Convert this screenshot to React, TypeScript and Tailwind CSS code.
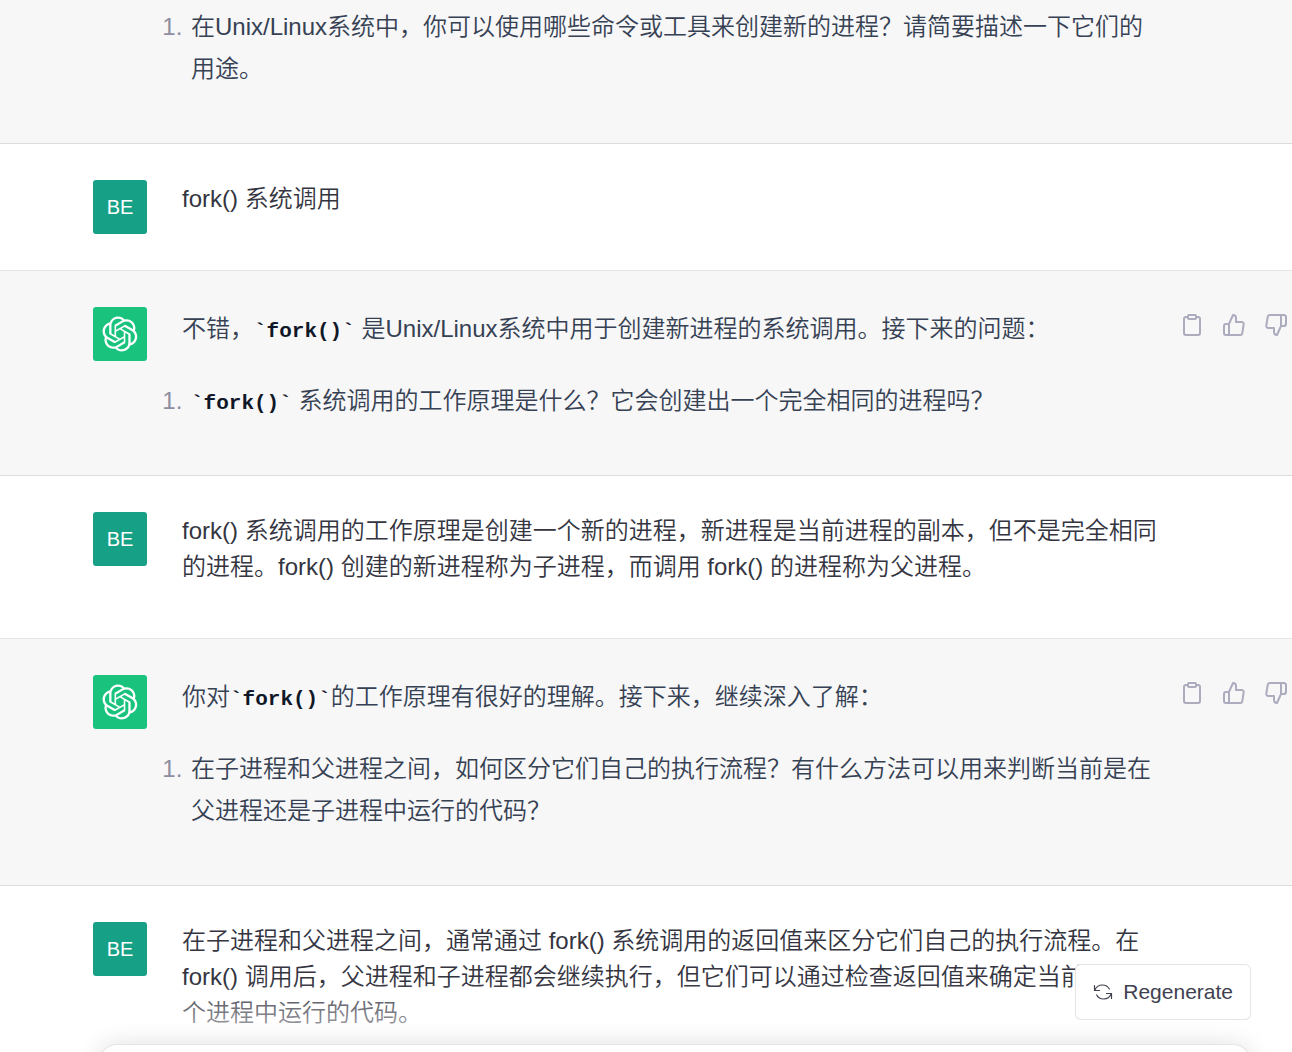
import type { ReactNode } from "react";
import { FiClipboard, FiThumbsDown, FiThumbsUp } from "react-icons/fi";

const OpenAIIcon = () => (
  <svg width="36" height="36" viewBox="0 0 41 41" fill="currentColor">
    <path d="M37.5324 16.8707C37.9808 15.5241 38.1363 14.0974 37.9886 12.6859C37.8409 11.2744 37.3934 9.91076 36.676 8.68622C35.6126 6.83404 33.9882 5.3676 32.0373 4.4985C30.0864 3.62941 27.9098 3.40259 25.8215 3.85078C24.8796 2.7893 23.7219 1.94125 22.4257 1.36341C21.1295 0.785575 19.7249 0.491269 18.3058 0.500197C16.1708 0.495044 14.0893 1.16803 12.3614 2.42214C10.6335 3.67624 9.34853 5.44666 8.6917 7.47815C7.30085 7.76286 5.98686 8.3414 4.8377 9.17505C3.68854 10.0087 2.73073 11.0782 2.02839 12.312C0.956464 14.1591 0.498905 16.2988 0.721698 18.4228C0.944492 20.5467 1.83612 22.5449 3.268 24.1293C2.81966 25.4759 2.66413 26.9026 2.81182 28.3141C2.95951 29.7256 3.40701 31.0892 4.12437 32.3138C5.18791 34.1659 6.8123 35.6322 8.76321 36.5013C10.7141 37.3704 12.8907 37.5973 14.9789 37.1492C15.9208 38.2107 17.0786 39.0587 18.3747 39.6366C19.6709 40.2144 21.0755 40.5087 22.4946 40.4998C24.6307 40.5054 26.7133 39.8321 28.4418 38.5772C30.1704 37.3223 31.4556 35.5506 32.1119 33.5179C33.5027 33.2332 34.8167 32.6547 35.9659 31.821C37.115 30.9874 38.0728 29.9178 38.7752 28.684C39.8458 26.8371 40.3023 24.6979 40.0789 22.5748C39.8556 20.4517 38.9639 18.4544 37.5324 16.8707ZM22.4978 37.8849C20.7443 37.8874 19.0459 37.2733 17.6994 36.1501C17.7601 36.117 17.8666 36.0586 17.936 36.0161L25.9004 31.4156C26.1003 31.3019 26.2663 31.137 26.3813 30.9378C26.4964 30.7386 26.5563 30.5124 26.5549 30.2825V19.0542L29.9213 20.998C29.9389 21.0068 29.9541 21.0198 29.9656 21.0359C29.977 21.052 29.9842 21.0707 29.9867 21.0902V30.3889C29.9842 32.375 29.1946 34.2791 27.7909 35.6841C26.3872 37.0892 24.4838 37.8806 22.4978 37.8849ZM6.39227 31.0064C5.51397 29.4888 5.19742 27.7107 5.49804 25.9832C5.55718 26.0187 5.66048 26.0818 5.73461 26.1244L13.699 30.7248C13.8975 30.8408 14.1233 30.902 14.3532 30.902C14.583 30.902 14.8088 30.8408 15.0073 30.7248L24.731 25.1103V28.9979C24.7321 29.0177 24.7283 29.0376 24.7199 29.0556C24.7115 29.0736 24.6988 29.0893 24.6829 29.1012L16.6317 33.7497C14.9096 34.7416 12.8643 35.0097 10.9447 34.4954C9.02506 33.9811 7.38785 32.7263 6.39227 31.0064ZM4.29707 13.6194C5.17156 12.0998 6.55279 10.9364 8.19885 10.3327C8.19885 10.4013 8.19491 10.5228 8.19491 10.6071V19.808C8.19351 20.0378 8.25334 20.2638 8.36823 20.4629C8.48312 20.6619 8.64893 20.8267 8.84863 20.9404L18.5723 26.5542L15.206 28.4979C15.1894 28.5089 15.1703 28.5155 15.1505 28.5173C15.1307 28.5191 15.1107 28.516 15.0924 28.5082L7.04046 23.8557C5.32135 22.8601 4.06716 21.2235 3.55289 19.3046C3.03862 17.3858 3.30624 15.3413 4.29707 13.6194ZM31.955 20.0556L22.2312 14.4411L25.5976 12.4981C25.6142 12.4872 25.6333 12.4805 25.6531 12.4787C25.6729 12.4769 25.6928 12.4801 25.7111 12.4879L33.7631 17.1364C34.9967 17.849 36.0017 18.8982 36.6606 20.1613C37.3194 21.4244 37.6047 22.849 37.4832 24.2684C37.3617 25.6878 36.8382 27.0432 35.9743 28.1759C35.1103 29.3086 33.9415 30.1717 32.6047 30.6641C32.6047 30.5947 32.6047 30.4733 32.6047 30.3889V21.188C32.6066 20.9586 32.5474 20.7328 32.4332 20.5338C32.319 20.3348 32.154 20.1698 31.955 20.0556ZM35.3055 15.0128C35.2464 14.9765 35.1431 14.9142 35.069 14.8717L27.1045 10.2712C26.906 10.1554 26.6803 10.0943 26.4504 10.0943C26.2206 10.0943 25.9948 10.1554 25.7963 10.2712L16.0726 15.8858V11.9982C16.0715 11.9783 16.0753 11.9585 16.0837 11.9405C16.0921 11.9225 16.1048 11.9068 16.1207 11.8949L24.1719 7.25025C25.4053 6.53903 26.8158 6.19376 28.2383 6.25482C29.6608 6.31589 31.0364 6.78077 32.2044 7.59508C33.3723 8.40939 34.2842 9.53945 34.8334 10.8531C35.3826 12.1667 35.5464 13.6095 35.3055 15.0128ZM14.2424 21.9419L10.8752 19.9981C10.8576 19.9893 10.8423 19.9763 10.8309 19.9602C10.8195 19.9441 10.8122 19.9254 10.8098 19.9058V10.6071C10.8107 9.18295 11.2173 7.78848 11.9819 6.58696C12.7466 5.38544 13.8377 4.42659 15.1275 3.82264C16.4173 3.21869 17.8524 2.99464 19.2649 3.1767C20.6775 3.35876 22.0089 3.93941 23.1034 4.85067C23.0427 4.88379 22.937 4.94215 22.8668 4.98473L14.9024 9.58517C14.7025 9.69878 14.5366 9.86356 14.4215 10.0626C14.3065 10.2616 14.2466 10.4877 14.2479 10.7175L14.2424 21.9419ZM16.071 17.9991L20.4018 15.4978L24.7325 17.9975V22.9985L20.4018 25.4983L16.071 22.9985V17.9991Z" />
  </svg>
);

const RegenerateIcon = () => (
  <svg
    width="20"
    height="20"
    viewBox="0 0 20 20"
    fill="none"
    stroke="currentColor"
    strokeWidth="1.2"
    strokeLinecap="round"
    strokeLinejoin="round"
  >
    <path d="M1.5 3.5v5h5M1.8 8.3C3 5 6 3 9.5 3c3 0 5.5 1.5 6.8 4" />
    <path d="M18.5 16.500v-5h-5M18.2 11.7C17 15 14 17 10.5 17c-3 0-5.5-1.5-6.8-4" />
  </svg>
);

const UserMessage = ({ children }: { children: ReactNode }) => (
  <div className="border-b border-black/10 bg-white text-[#343541]">
    <div className="flex gap-[35px] py-9 pl-[93px] pr-[130px]">
      <div className="flex size-[54px] shrink-0 items-center justify-center rounded-[3px] bg-[#16a085] text-xl text-white">
        BE
      </div>
      <p className="min-w-0 flex-1 pb-[17px] pt-px leading-9">{children}</p>
    </div>
  </div>
);

const iconButton = "shrink-0 p-1.5 hover:text-gray-700";

const AssistantMessage = ({ children }: { children: ReactNode }) => (
  <div className="border-b border-black/10 bg-[#f7f7f8] text-gray-700">
    <div className="flex gap-[35px] py-9 pl-[93px]">
      <div className="flex size-[54px] shrink-0 items-center justify-center rounded-[3px] bg-[#19c37d] text-white">
        <OpenAIIcon />
      </div>
      <div className="flex min-w-0 flex-1 gap-3">
        <div className="flex min-w-0 flex-1 flex-col gap-[30px] pb-[17px] pt-px leading-[42px]">
          {children}
        </div>
        <div className="flex w-[118px] shrink-0 items-start gap-1.5 text-[#acacbe]">
          <button className={iconButton} aria-label="Copy">
            <FiClipboard size={24} />
          </button>
          <button className={iconButton} aria-label="Good response">
            <FiThumbsUp size={24} />
          </button>
          <button className={iconButton} aria-label="Bad response">
            <FiThumbsDown size={24} />
          </button>
        </div>
      </div>
    </div>
  </div>
);

const Questions = ({ children }: { children: ReactNode }) => (
  <ol className="list-decimal pl-[7px] marker:text-[#8e8ea0]">
    <li className="pl-0.5">{children}</li>
  </ol>
);

const Code = ({ children }: { children: ReactNode }) => (
  <code className="font-['Liberation_Mono',monospace] text-[21px] font-bold leading-none text-gray-900">
    `{children}`
  </code>
);

const App = () => {
  return (
    <div
      lang="zh-CN"
      className="relative h-screen overflow-hidden bg-white font-['Liberation_Sans','Noto_Sans_CJK_SC',sans-serif] text-2xl font-[350]"
    >
      <main>
        <div className="border-b border-black/10 bg-[#f7f7f8] pb-[53px] pl-[182px] pr-[130px] pt-1.5 leading-[42px] text-gray-700">
          <Questions>
            在Unix/Linux系统中，你可以使用哪些命令或工具来创建新的进程？请简要描述一下它们的用途。
          </Questions>
        </div>

        <UserMessage>fork() 系统调用</UserMessage>

        <AssistantMessage>
          <p>
            不错，<Code>fork()</Code> 是Unix/Linux系统中用于创建新进程的系统调用。接下来的问题：
          </p>
          <Questions>
            <Code>fork()</Code> 系统调用的工作原理是什么？它会创建出一个完全相同的进程吗？
          </Questions>
        </AssistantMessage>

        <UserMessage>
          fork() 系统调用的工作原理是创建一个新的进程，新进程是当前进程的副本，但不是完全相同的进程。fork() 创建的新进程称为子进程，而调用 fork() 的进程称为父进程。
        </UserMessage>

        <AssistantMessage>
          <p>
            你对<Code>fork()</Code>的工作原理有很好的理解。接下来，继续深入了解：
          </p>
          <Questions>
            在子进程和父进程之间，如何区分它们自己的执行流程？有什么方法可以用来判断当前是在父进程还是子进程中运行的代码？
          </Questions>
        </AssistantMessage>

        <UserMessage>
          在子进程和父进程之间，通常通过 fork() 系统调用的返回值来区分它们自己的执行流程。在 fork() 调用后，父进程和子进程都会继续执行，但它们可以通过检查返回值来确定当前是在哪个进程中运行的代码。
        </UserMessage>
      </main>

      <footer className="absolute inset-x-0 bottom-0 bg-linear-to-b from-white/0 from-20% to-white/80 pl-[99px] pr-[41px]">
        <div className="flex justify-end pb-6">
          <button className="flex h-14 items-center gap-2.5 rounded-md border border-black/10 bg-white px-[17px] text-[21px] text-[#40414f]">
            <RegenerateIcon />
            Regenerate
          </button>
        </div>
        <div className="-mb-12 h-14 rounded-[18px] border border-black/10 bg-white shadow-[0_0_24px_rgba(0,0,0,0.12)]" />
      </footer>
    </div>
  );
};

export default App;
